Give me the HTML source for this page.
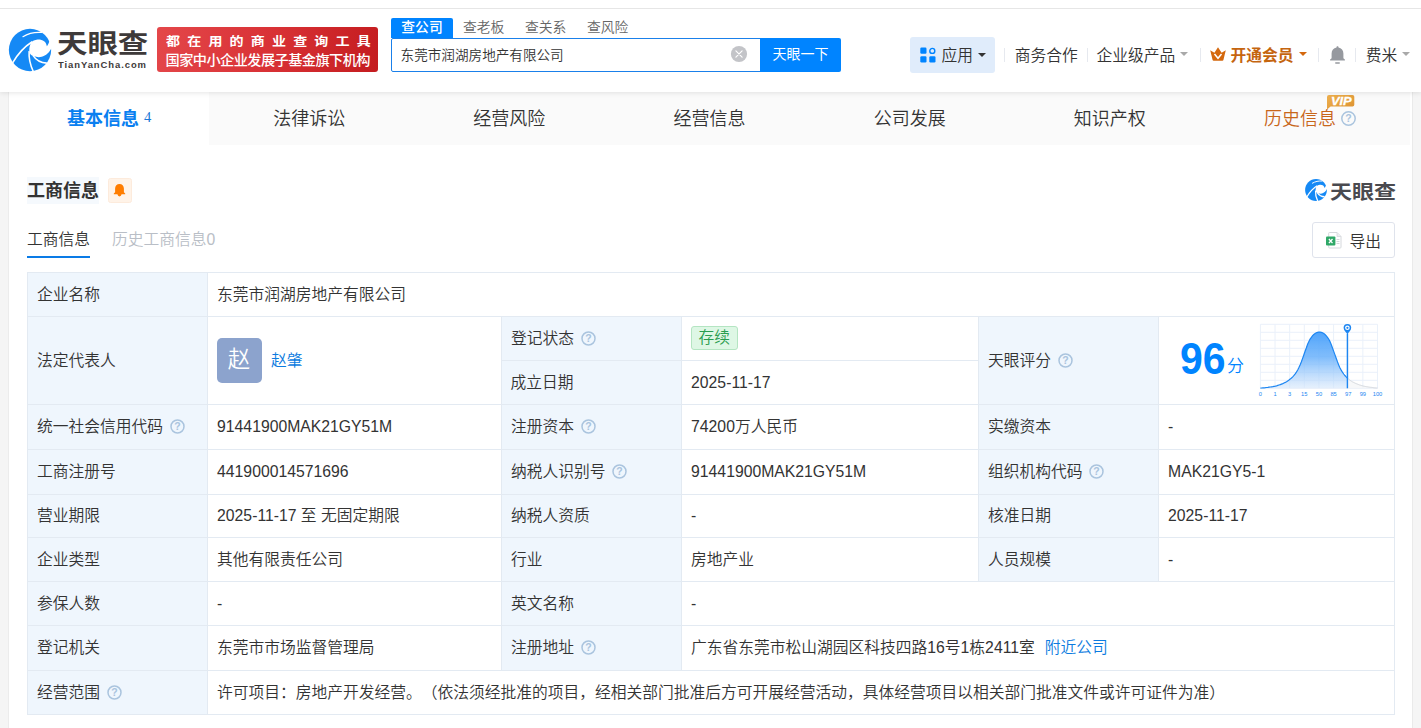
<!DOCTYPE html>
<html lang="zh-CN">
<head>
<meta charset="utf-8">
<title>东莞市润湖房地产有限公司 - 天眼查</title>
<style>
*{box-sizing:border-box;margin:0;padding:0}
html,body{width:1421px;height:728px;overflow:hidden}
body{background:#f5f5f5;font-family:"Liberation Sans","Noto Sans CJK SC",sans-serif;color:#333;position:relative;font-size:15.75px;font-weight:350;text-spacing-trim:space-all}
.abs{position:absolute;white-space:nowrap}
svg{position:absolute;overflow:visible}
/* header */
#hdr{position:absolute;left:0;top:0;width:1421px;height:92px;background:#fff;box-shadow:0 1px 5px rgba(0,0,0,.10);z-index:5}
#topline{position:absolute;left:0;top:8px;width:1421px;height:1px;background:#e6e6e6}
#brand{left:57px;top:21.5px;font-size:30.4px;line-height:44px;font-weight:700;color:#3e3a3a;transform-origin:0 50%;transform:scaleY(.85)}
#brand2{left:58px;top:56.5px;font-size:9px;line-height:16px;font-weight:700;color:#3e3a3a;letter-spacing:.88px;transform-origin:0 50%;transform:scaleX(1.05)}
#banner{position:absolute;left:157px;top:27px;width:221px;height:45px;border-radius:3px;background:linear-gradient(100deg,#e4474a 0%,#d93236 50%,#c41c1f 100%);color:#fff}
#banner .l1{left:9px;top:5px;font-size:12.4px;line-height:20px;font-weight:700;letter-spacing:6.36px;transform-origin:0 50%;transform:scaleX(1.13)}
#banner .l2{left:8.5px;top:22.6px;font-size:14.2px;line-height:20px;letter-spacing:-.56px;font-weight:500}
.stab{top:18px;height:20px;font-size:13.8px;line-height:20px;color:#666;text-align:center}
#stab1{left:391px;width:62px;background:#0084ff;color:#fff;font-weight:500;border-radius:2px 2px 0 0}
#sbox{position:absolute;left:391px;top:38px;width:370px;height:34px;border:1px solid #1a80ea;border-radius:2px 0 0 2px;background:#fff}
#sbox span{left:8.6px;top:0;font-size:13.6px;line-height:34px;color:#333}
#sbtn{left:760px;top:38px;width:81px;height:34px;background:#0084ff;color:#fff;font-weight:400;font-size:14px;line-height:33px;text-align:center;border-radius:0 2px 2px 0}
.nav{top:42.6px;font-size:15.75px;line-height:26px;color:#333}
.sep{position:absolute;top:48px;width:1px;height:14px;background:#e6e9ef}
.caret{position:absolute;top:52px;width:0;height:0;border-left:4px solid transparent;border-right:4px solid transparent;border-top:4.5px solid #a9a9a9}
#app{position:absolute;left:910px;top:37px;width:85px;height:36px;background:#e0ecfb;border-radius:3px}
/* tabs */
#wrap{position:absolute;left:8px;top:92px;width:1405px;height:636px;background:#fff;border-left:1px solid #ececec;border-right:1px solid #eaeaea}
#tabs{position:absolute;left:0;top:0;width:1401px;height:53.3px;background:#fafafa}
.tab{position:absolute;top:0;height:53.3px;width:200.14px;text-align:center;font-size:18px;line-height:55.4px;color:#333;white-space:nowrap}
#tab1{left:0;background:#fff;color:#0a7ff0;font-weight:700}
#tab1 i{font-style:normal;font-weight:400;font-size:14.6px;font-family:"Liberation Serif",serif;margin-left:5px;position:relative;top:-2.8px;color:#1a78d6}
/* section */
#secthl{position:absolute;left:18px;top:85px;width:72px;height:27px;background:#f5f9fd}
#sect{left:18px;top:85px;font-size:18px;line-height:28px;font-weight:700;color:#333}
#bellbox{position:absolute;left:99px;top:86px;width:24px;height:25px;background:#fff3e8;border:1px solid #fdebdc;border-radius:2.5px}
#sub1{left:18px;top:135.8px;font-size:15.75px;line-height:24px;color:#333}
#sub1u{position:absolute;left:18px;top:164px;width:63px;height:2px;background:#0a7be6}
#sub2{left:103px;top:135.8px;font-size:15.75px;line-height:24px;color:#b9bec6}
#wm{left:1321px;top:86.5px;font-size:22px;line-height:28px;font-weight:700;color:#4a4a4f;transform-origin:0 50%;transform:scaleY(.88)}
#export{position:absolute;left:1303px;top:130px;width:83px;height:36px;border:1px solid #dfe3ec;border-radius:3px;background:#fff}
#export span{left:36.5px;top:6px;font-size:15.75px;line-height:26px;color:#333}
/* table */
#tbl{position:absolute;left:18px;top:180px;border-collapse:collapse;table-layout:fixed;width:1367px;font-size:15.75px;color:#333}
#tbl td{border:1px solid #e3eaf2;padding:0 0 0 9.6px;vertical-align:middle;white-space:nowrap;line-height:22px;overflow:hidden;position:relative}
#tbl td.k{background:#eff6fd}
#tbl td.k:first-child{padding-left:9px}
.q{display:inline-block;position:relative;width:15px;height:15px;margin-left:6.5px;vertical-align:-2px}
.q svg{left:0;top:0}
a{color:#0b7be0;text-decoration:none}
#avatar{position:absolute;left:9px;top:21px;width:45px;height:45px;border-radius:5px;background:#8ca3cd;color:#fff;font-size:22.5px;line-height:44px;text-align:center}
#badge{display:inline-block;margin-left:-.6px;width:47.5px;height:24px;border:1px solid #b4e5c2;background:#def7e5;border-radius:3px;color:#2a9d4f;text-align:center;line-height:22px;position:relative;top:-1px}
#score{position:absolute;left:21.5px;top:16.5px;font-size:44px;line-height:50px;transform-origin:0 50%;transform:scaleX(.93);font-weight:700;color:#0084ff;font-family:"Liberation Sans",sans-serif}
#fen{position:absolute;left:68.5px;top:38.5px;font-size:17px;line-height:22px;color:#0084ff}
</style>
</head>
<body>
<div id="hdr">
 <div id="topline"></div>
 <svg id="logo" style="left:4px;top:24px" width="52" height="52" viewBox="0 0 728 728">
  <circle cx="364" cy="364" r="296" fill="#1589f5"/>
  <path d="M600 312C590 245 540 215 470 218C430 222 400 240 385 255C355 300 345 360 362 410C375 435 395 448 415 448C480 480 580 470 645 372C655 355 660 345 662 338L700 330L700 250L640 230C625 270 615 290 600 312Z" fill="#fff"/>
  <path d="M265 178C340 130 440 112 530 118" stroke="#fff" stroke-width="16" fill="none" stroke-linecap="round"/>
  <path d="M395 248C280 320 180 440 118 548" stroke="#fff" stroke-width="22" fill="none"/>
  <path d="M352 380C345 480 370 580 410 665" stroke="#fff" stroke-width="22" fill="none"/>
  <path d="M405 440C450 510 520 545 600 548" stroke="#fff" stroke-width="22" fill="none"/>
 </svg>
 <div id="brand" class="abs">天眼查</div>
 <div id="brand2" class="abs">TianYanCha.com</div>
 <div id="banner"><div class="abs l1">都在用的商业查询工具</div><div class="abs l2">国家中小企业发展子基金旗下机构</div></div>
 <div id="stab1" class="abs stab">查公司</div>
 <div class="abs stab" style="left:463px">查老板</div>
 <div class="abs stab" style="left:525px">查关系</div>
 <div class="abs stab" style="left:587px">查风险</div>
 <div id="sbox"><span class="abs">东莞市润湖房地产有限公司</span></div>
 <svg style="left:731px;top:46px" width="16" height="16" viewBox="0 0 16 16"><circle cx="8" cy="8" r="8.100" fill="#c3c4c8"/><path d="M4.900 4.900l6.200 6.200M11.100 4.900l-6.200 6.200" stroke="#fff" stroke-width="1.150" stroke-linecap="round"/></svg>
 <div id="sbtn" class="abs">天眼一下</div>
 <div id="app"></div>
 <svg style="left:920px;top:47px" width="16" height="16" viewBox="0 0 16 16"><rect x=".3" y=".6" width="6.2" height="6.2" rx="1.2" fill="#0084ff"/><rect x=".3" y="9.3" width="6.2" height="6.2" rx="1.2" fill="#0084ff"/><rect x="9.3" y="9.3" width="6.2" height="6.2" rx="1.2" fill="#0084ff"/><circle cx="12.3" cy="3.9" r="2.5" fill="none" stroke="#0084ff" stroke-width="1.4"/></svg>
 <div class="abs nav" style="left:941.4px">应用</div>
 <div class="caret" style="left:978px;top:53px;border-top-color:#333"></div>
 <div class="sep" style="left:1004px"></div>
 <div class="abs nav" style="left:1014.7px">商务合作</div>
 <div class="sep" style="left:1087px"></div>
 <div class="abs nav" style="left:1096.5px">企业级产品</div>
 <div class="caret" style="left:1180px"></div>
 <div class="sep" style="left:1200px"></div>
 <svg style="left:1210px;top:47.3px" width="16" height="14.600" viewBox="0 0 16 14" preserveAspectRatio="none"><path d="M.2 3.2L2.6 12.4Q2.8 13.2 3.6 13.2H12.4Q13.2 13.2 13.4 12.4L15.8 3.2L11.6 5.6L8 .3L4.4 5.6Z" fill="#d4680e"/><path d="M4.5 6.6L8 10.8L11.5 6.6" stroke="#fff" stroke-width="1.5" fill="none"/></svg>
 <div class="abs nav" style="left:1230.4px;color:#c5650f;font-weight:700">开通会员</div>
 <div class="caret" style="left:1298.5px;border-top-color:#d4680e"></div>
 <div class="sep" style="left:1318px"></div>
 <svg style="left:1329px;top:46px" width="17" height="18" viewBox="0 0 17 18"><path d="M8.5 .2c.6 0 1 .4 1 1v.4c2.900 .600 4.900 2.900 4.900 6v4.600l1.500 1.300v1h-14.800v-1l1.500-1.300v-4.600c0-3.100 2-5.400 4.900-6v-.4c0-.6.4-1 1-1z" fill="#96999f"/><rect x="6.100" y="16.200" width="4.800" height="1.500" rx=".6" fill="#96999f"/></svg>
 <div class="sep" style="left:1355px"></div>
 <div class="abs nav" style="left:1365.7px">费米</div>
 <div class="caret" style="left:1402px"></div>
</div>
<div id="wrap">
 <div id="tabs">
  <div class="tab" id="tab1">基本信息<i>4</i></div>
  <div class="tab" style="left:200.14px">法律诉讼</div>
  <div class="tab" style="left:400.3px">经营风险</div>
  <div class="tab" style="left:600.4px">经营信息</div>
  <div class="tab" style="left:800.6px">公司发展</div>
  <div class="tab" style="left:1000.7px">知识产权</div>
  <div class="tab" style="left:1200.9px;color:#c8661a">历史信息<span class="q" style="width:15px;height:15px;margin-left:5px;vertical-align:-1px"><svg width="15" height="15" viewBox="0 0 15 15"><circle cx="7.5" cy="7.5" r="6.700" fill="none" stroke="#aac4de" stroke-width="1.500"/><text x="7.5" y="11.300" font-size="10.500" font-weight="700" text-anchor="middle" fill="#aac4de" font-family="Liberation Sans,sans-serif">?</text></svg></span></div>
 </div>
 <svg style="left:1318px;top:3px" width="28" height="15" viewBox="0 0 28 15"><defs><linearGradient id="vg" x1="0" y1="0" x2="1" y2="1"><stop offset="0" stop-color="#eeb04e"/><stop offset="1" stop-color="#dc9130"/></linearGradient></defs><path d="M2 0H25.500Q27.300 0 27.300 1.800V9.800Q27.300 11.600 25.500 11.600H3.600L0 14.600V2Q0 0 2 0Z" fill="url(#vg)"/><text transform="translate(14.300 9.500) scale(1.28 1)" x="0" y="0" font-size="10" font-weight="700" font-style="italic" text-anchor="middle" fill="#fff" stroke="#fff" stroke-width=".25" font-family="Liberation Sans,sans-serif">VIP</text></svg>
 <div id="secthl"></div>
 <div id="sect" class="abs">工商信息</div>
 <div id="bellbox"><svg style="left:4.400px;top:4px" width="13" height="14" viewBox="0 0 13 14"><path d="M6.500 .9c2.600 0 4.400 1.900 4.400 4.600v3.800l1.300 1.200v.7h-11.400v-.7l1.300-1.200v-3.800c0-2.700 1.800-4.600 4.400-4.600z" fill="#ff7d00"/><path d="M4.400 11h4.200q-.3 2.400-2.100 2.400t-2.100-2.400z" fill="#ff7d00"/></svg></div>
 <div id="sub1" class="abs">工商信息</div><div id="sub1u"></div>
 <div id="sub2" class="abs">历史工商信息0</div>
 <svg style="left:1295px;top:86.4px" width="24" height="24" viewBox="0 0 728 728">
  <circle cx="364" cy="364" r="330" fill="#1589f5"/>
  <g transform="translate(364 364) scale(1.11) translate(-364 -364)">
  <path d="M600 312C590 245 540 215 470 218C430 222 400 240 385 255C355 300 345 360 362 410C375 435 395 448 415 448C480 480 580 470 645 372C655 355 660 345 662 338L700 330L700 250L640 230C625 270 615 290 600 312Z" fill="#fff"/>
  <path d="M265 178C340 130 440 112 530 118" stroke="#fff" stroke-width="26" fill="none" stroke-linecap="round"/>
  <path d="M395 248C280 320 180 440 118 548" stroke="#fff" stroke-width="36" fill="none"/>
  <path d="M352 380C345 480 370 580 410 665" stroke="#fff" stroke-width="36" fill="none"/>
  <path d="M405 440C450 510 520 545 600 548" stroke="#fff" stroke-width="36" fill="none"/>
  </g>
 </svg>
 <div id="wm" class="abs">天眼查</div>
 <div id="export">
  <svg style="left:13px;top:9px" width="17" height="17" viewBox="0 0 17 17"><path d="M3.500 .5H11l4 4V15.200q0 .8-.8.800H3.500q-.8 0-.8-.8V1.300q0-.8.800-.8z" fill="#fff" stroke="#d5d8dc" stroke-width="1"/><path d="M11 .5v4h4" fill="#eceef0" stroke="#d5d8dc" stroke-width=".8"/><path d="M10.500 7.500h3M10.500 9.500h3M10.500 11.500h3" stroke="#cfd3d7" stroke-width=".9"/><rect x="0" y="4.600" width="9.400" height="9" rx="1" fill="#2fa867"/><path d="M2.900 7l3.600 4.200M6.500 7l-3.600 4.200" stroke="#fff" stroke-width="1.300"/></svg>
  <span class="abs">导出</span></div>
 <table id="tbl">
  <colgroup><col style="width:179.5px"><col style="width:294px"><col style="width:180px"><col style="width:297px"><col style="width:180px"><col style="width:236.5px"></colgroup>
  <tr style="height:44px"><td class="k">企业名称</td><td colspan="5">东莞市润湖房地产有限公司</td></tr>
  <tr style="height:44px"><td class="k" rowspan="2">法定代表人</td><td rowspan="2"><div id="avatar">赵</div><a style="margin-left:54px">赵肇</a></td><td class="k">登记状态<span class="q"><svg width="15" height="15" viewBox="0 0 15 15"><circle cx="7.5" cy="7.5" r="6.500" fill="none" stroke="#aac4de" stroke-width="1.500"/><text x="7.5" y="11.200" font-size="10.500" font-weight="700" text-anchor="middle" fill="#aac4de" font-family="Liberation Sans,sans-serif">?</text></svg></span></td><td><span id="badge">存续</span></td><td class="k" rowspan="2">天眼评分<span class="q"><svg width="15" height="15" viewBox="0 0 15 15"><circle cx="7.5" cy="7.5" r="6.500" fill="none" stroke="#aac4de" stroke-width="1.500"/><text x="7.5" y="11.200" font-size="10.500" font-weight="700" text-anchor="middle" fill="#aac4de" font-family="Liberation Sans,sans-serif">?</text></svg></span></td><td rowspan="2"><div id="score">96</div><div id="fen">分</div>
   <svg style="left:92px;top:1px" width="150" height="84" viewBox="0 0 150 84">
    <defs><linearGradient id="cg" x1="0" y1="0" x2="0" y2="1"><stop offset="0" stop-color="#4aa1fb" stop-opacity=".97"/><stop offset=".45" stop-color="#62adfb" stop-opacity=".8"/><stop offset="1" stop-color="#d6e7fb" stop-opacity=".6"/></linearGradient></defs>
    <g stroke="#eaf1fa" stroke-width="1" fill="none"><path d="M9.40 6.30V70.30"/><path d="M24.04 6.30V70.30"/><path d="M38.68 6.30V70.30"/><path d="M53.31 6.30V70.30"/><path d="M67.95 6.30V70.30"/><path d="M82.59 6.30V70.30"/><path d="M97.23 6.30V70.30"/><path d="M111.86 6.30V70.30"/><path d="M126.50 6.30V70.30"/><path d="M9.40 6.30H126.50"/><path d="M9.40 14.30H126.50"/><path d="M9.40 22.30H126.50"/><path d="M9.40 30.30H126.50"/><path d="M9.40 38.30H126.50"/><path d="M9.40 46.30H126.50"/><path d="M9.40 54.30H126.50"/><path d="M9.40 62.30H126.50"/><path d="M9.40 70.30H126.50"/></g>
    <path d="M96.4 60.1 L97.4 60.9 L98.4 61.7 L99.4 62.5 L100.4 63.2 L101.4 63.8 L102.4 64.3 L103.4 64.8 L104.4 65.3 L105.4 65.7 L106.4 66.1 L107.4 66.5 L108.4 66.9 L109.4 67.2 L110.4 67.5 L111.5 67.8 L112.5 68.1 L113.5 68.3 L114.5 68.5 L115.5 68.7 L116.5 68.8 L117.5 69.0 L118.5 69.2 L119.5 69.3 L120.5 69.4 L121.5 69.5 L122.5 69.7 L123.5 69.8 L124.5 69.9 L125.5 70.0 L126.5 70.0 L126.5 70.3 L96.4 70.3 Z" fill="#f3f5f7" fill-opacity=".7"/>
    <path d="M96.4 60.1 L97.4 60.9 L98.4 61.7 L99.4 62.5 L100.4 63.2 L101.4 63.8 L102.4 64.3 L103.4 64.8 L104.4 65.3 L105.4 65.7 L106.4 66.1 L107.4 66.5 L108.4 66.9 L109.4 67.2 L110.4 67.5 L111.5 67.8 L112.5 68.1 L113.5 68.3 L114.5 68.5 L115.5 68.7 L116.5 68.8 L117.5 69.0 L118.5 69.2 L119.5 69.3 L120.5 69.4 L121.5 69.5 L122.5 69.7 L123.5 69.8 L124.5 69.9 L125.5 70.0 L126.5 70.0" fill="none" stroke="#d3d7dd" stroke-width="1"/>
    <path d="M9.4 70.1 L10.6 70.0 L11.9 69.9 L13.1 69.8 L14.4 69.7 L15.6 69.5 L16.9 69.4 L18.1 69.2 L19.3 69.0 L20.6 68.8 L21.8 68.6 L23.1 68.3 L24.3 68.1 L25.6 67.8 L26.8 67.4 L28.0 67.0 L29.3 66.6 L30.5 66.1 L31.8 65.6 L33.0 65.0 L34.3 64.4 L35.5 63.7 L36.7 62.9 L38.0 62.0 L39.2 61.1 L40.5 60.0 L41.7 58.8 L43.0 57.4 L44.2 55.9 L45.4 54.1 L46.7 52.0 L47.9 49.6 L49.2 46.8 L50.4 43.7 L51.7 40.1 L52.9 36.7 L54.1 33.3 L55.4 29.8 L56.6 26.3 L57.9 23.5 L59.1 21.1 L60.4 19.3 L61.6 17.7 L62.8 16.5 L64.1 15.5 L65.3 14.8 L66.6 14.4 L67.8 14.1 L69.1 14.1 L70.3 14.4 L71.5 14.8 L72.8 15.6 L74.0 16.5 L75.3 17.8 L76.5 19.4 L77.8 21.2 L79.0 23.6 L80.2 26.5 L81.5 30.0 L82.7 33.4 L84.0 36.9 L85.2 40.3 L86.5 43.9 L87.7 47.0 L88.9 49.7 L90.2 52.1 L91.4 54.2 L92.7 56.0 L93.9 57.5 L95.2 58.9 L96.4 60.1 L96.4 70.3 L9.4 70.3 Z" fill="url(#cg)"/>
    <path d="M9.4 70.1 L10.6 70.0 L11.9 69.9 L13.1 69.8 L14.4 69.7 L15.6 69.5 L16.9 69.4 L18.1 69.2 L19.3 69.0 L20.6 68.8 L21.8 68.6 L23.1 68.3 L24.3 68.1 L25.6 67.8 L26.8 67.4 L28.0 67.0 L29.3 66.6 L30.5 66.1 L31.8 65.6 L33.0 65.0 L34.3 64.4 L35.5 63.7 L36.7 62.9 L38.0 62.0 L39.2 61.1 L40.5 60.0 L41.7 58.8 L43.0 57.4 L44.2 55.9 L45.4 54.1 L46.7 52.0 L47.9 49.6 L49.2 46.8 L50.4 43.7 L51.7 40.1 L52.9 36.7 L54.1 33.3 L55.4 29.8 L56.6 26.3 L57.9 23.5 L59.1 21.1 L60.4 19.3 L61.6 17.7 L62.8 16.5 L64.1 15.5 L65.3 14.8 L66.6 14.4 L67.8 14.1 L69.1 14.1 L70.3 14.4 L71.5 14.8 L72.8 15.6 L74.0 16.5 L75.3 17.8 L76.5 19.4 L77.8 21.2 L79.0 23.6 L80.2 26.5 L81.5 30.0 L82.7 33.4 L84.0 36.9 L85.2 40.3 L86.5 43.9 L87.7 47.0 L88.9 49.7 L90.2 52.1 L91.4 54.2 L92.7 56.0 L93.9 57.5 L95.2 58.9 L96.4 60.1" fill="none" stroke="#1d86f2" stroke-width="1.2"/>
    <g transform="translate(96.40 0)"><path d="M0 16V70.300" stroke="#1d86f2" stroke-width="1.400"/>
    <path d="M0 16.600C-1.200 14.200 -3.800 12.600 -3.800 9.800a3.800 3.800 0 0 1 7.600 0c0 2.800-2.600 4.400-3.800 6.800z" fill="#1d86f2"/>
    <circle cx="0" cy="9.800" r="2.300" fill="#fff"/><circle cx="0" cy="9.800" r="1.100" fill="#1d86f2"/></g>
    <g font-size="11.500" fill="#1d86f2" font-family="Liberation Sans,sans-serif"><text transform="translate(9.40 78.4) scale(0.5)" text-anchor="middle">0</text><text transform="translate(24.04 78.4) scale(0.5)" text-anchor="middle">1</text><text transform="translate(38.68 78.4) scale(0.5)" text-anchor="middle">3</text><text transform="translate(53.31 78.4) scale(0.5)" text-anchor="middle">15</text><text transform="translate(67.95 78.4) scale(0.5)" text-anchor="middle">50</text><text transform="translate(82.59 78.4) scale(0.5)" text-anchor="middle">85</text><text transform="translate(97.23 78.4) scale(0.5)" text-anchor="middle">97</text><text transform="translate(111.86 78.4) scale(0.5)" text-anchor="middle">99</text><text transform="translate(126.50 78.4) scale(0.5)" text-anchor="middle">100</text></g>
   </svg></td></tr>
  <tr style="height:44px"><td class="k">成立日期</td><td>2025-11-17</td></tr>
  <tr style="height:45px"><td class="k">统一社会信用代码<span class="q"><svg width="15" height="15" viewBox="0 0 15 15"><circle cx="7.5" cy="7.5" r="6.500" fill="none" stroke="#aac4de" stroke-width="1.500"/><text x="7.5" y="11.200" font-size="10.500" font-weight="700" text-anchor="middle" fill="#aac4de" font-family="Liberation Sans,sans-serif">?</text></svg></span></td><td>91441900MAK21GY51M</td><td class="k">注册资本<span class="q"><svg width="15" height="15" viewBox="0 0 15 15"><circle cx="7.5" cy="7.5" r="6.500" fill="none" stroke="#aac4de" stroke-width="1.500"/><text x="7.5" y="11.200" font-size="10.500" font-weight="700" text-anchor="middle" fill="#aac4de" font-family="Liberation Sans,sans-serif">?</text></svg></span></td><td>74200万人民币</td><td class="k">实缴资本</td><td>-</td></tr>
  <tr style="height:45px"><td class="k">工商注册号</td><td>441900014571696</td><td class="k">纳税人识别号<span class="q"><svg width="15" height="15" viewBox="0 0 15 15"><circle cx="7.5" cy="7.5" r="6.500" fill="none" stroke="#aac4de" stroke-width="1.500"/><text x="7.5" y="11.200" font-size="10.500" font-weight="700" text-anchor="middle" fill="#aac4de" font-family="Liberation Sans,sans-serif">?</text></svg></span></td><td>91441900MAK21GY51M</td><td class="k">组织机构代码<span class="q"><svg width="15" height="15" viewBox="0 0 15 15"><circle cx="7.5" cy="7.5" r="6.500" fill="none" stroke="#aac4de" stroke-width="1.500"/><text x="7.5" y="11.200" font-size="10.500" font-weight="700" text-anchor="middle" fill="#aac4de" font-family="Liberation Sans,sans-serif">?</text></svg></span></td><td>MAK21GY5-1</td></tr>
  <tr style="height:43px"><td class="k">营业期限</td><td>2025-11-17 至 无固定期限</td><td class="k">纳税人资质</td><td>-</td><td class="k">核准日期</td><td>2025-11-17</td></tr>
  <tr style="height:44px"><td class="k">企业类型</td><td>其他有限责任公司</td><td class="k">行业</td><td>房地产业</td><td class="k">人员规模</td><td>-</td></tr>
  <tr style="height:44px"><td class="k">参保人数</td><td>-</td><td class="k">英文名称</td><td colspan="3">-</td></tr>
  <tr style="height:45px"><td class="k">登记机关</td><td>东莞市市场监督管理局</td><td class="k">注册地址<span class="q"><svg width="15" height="15" viewBox="0 0 15 15"><circle cx="7.5" cy="7.5" r="6.500" fill="none" stroke="#aac4de" stroke-width="1.500"/><text x="7.5" y="11.200" font-size="10.500" font-weight="700" text-anchor="middle" fill="#aac4de" font-family="Liberation Sans,sans-serif">?</text></svg></span></td><td colspan="3">广东省东莞市松山湖园区科技四路16号1栋2411室<a style="margin-left:10px">附近公司</a></td></tr>
  <tr style="height:44px"><td class="k">经营范围<span class="q"><svg width="15" height="15" viewBox="0 0 15 15"><circle cx="7.5" cy="7.5" r="6.500" fill="none" stroke="#aac4de" stroke-width="1.500"/><text x="7.5" y="11.200" font-size="10.500" font-weight="700" text-anchor="middle" fill="#aac4de" font-family="Liberation Sans,sans-serif">?</text></svg></span></td><td colspan="5">许可项目：房地产开发经营。（依法须经批准的项目，经相关部门批准后方可开展经营活动，具体经营项目以相关部门批准文件或许可证件为准）</td></tr>
 </table>
</div>
</body>
</html>
